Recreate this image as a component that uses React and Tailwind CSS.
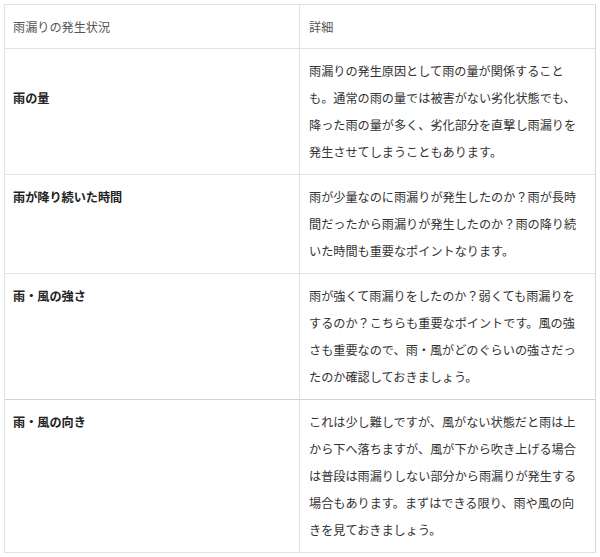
import React from 'react';

const rows = [
    {
        label: '雨の量',
        offset: true,
        text: '雨漏りの発生原因として雨の量が関係することも。通常の雨の量では被害がない劣化状態でも、降った雨の量が多く、劣化部分を直撃し雨漏りを発生させてしまうこともあります。',
    },
    {
        label: '雨が降り続いた時間',
        text: '雨が少量なのに雨漏りが発生したのか？雨が長時間だったから雨漏りが発生したのか？雨の降り続いた時間も重要なポイントなります。',
    },
    {
        label: '雨・風の強さ',
        text: '雨が強くて雨漏りをしたのか？弱くても雨漏りをするのか？こちらも重要なポイントです。風の強さも重要なので、雨・風がどのぐらいの強さだったのか確認しておきましょう。',
        strong: true,
    },
    {
        label: '雨・風の向き',
        text: 'これは少し難しですが、風がない状態だと雨は上から下へ落ちますが、風が下から吹き上げる場合は普段は雨漏りしない部分から雨漏りが発生する場合もあります。まずはできる限り、雨や風の向きを見ておきましょう。',
    },
];

const App = () => {
    return (
        <div className="bg-white w-[600px] h-[557px] pt-[4px] pl-[4px] font-['Noto_Sans_CJK_JP','Noto_Sans',sans-serif] text-[12.15px] leading-[27px]">
            <div className="w-[592px] grid grid-cols-[295px_1fr] border border-[#e2e2e2] border-r-[#d4d4d4]">
                <div className="px-[8px] py-[8px] text-[#555] border-r border-b border-[#e2e2e2]">雨漏りの発生状況</div>
                <div className="pl-[9px] pr-[10px] py-[8px] text-[#555] border-b border-[#e2e2e2]">詳細</div>
                {rows.map((row, i) => {
                    const last = i === rows.length - 1;
                    const line = last ? '' : row.strong ? 'border-b border-b-[#d2d2d2]' : 'border-b border-b-[#e2e2e2]';
                    return (
                        <React.Fragment key={i}>
                            <div className={`pl-[8px] pr-[8px] pt-[8px] pb-[9px] font-bold text-[#222] border-r border-r-[#e2e2e2] ${line}`}>
                                {row.offset && <br />}
                                {row.label}
                            </div>
                            <div className={`pl-[9px] pr-[12px] pt-[8px] pb-[9px] text-[#333] ${line}`}>
                                {row.text}
                            </div>
                        </React.Fragment>
                    );
                })}
            </div>
        </div>
    );
};

export default App;
